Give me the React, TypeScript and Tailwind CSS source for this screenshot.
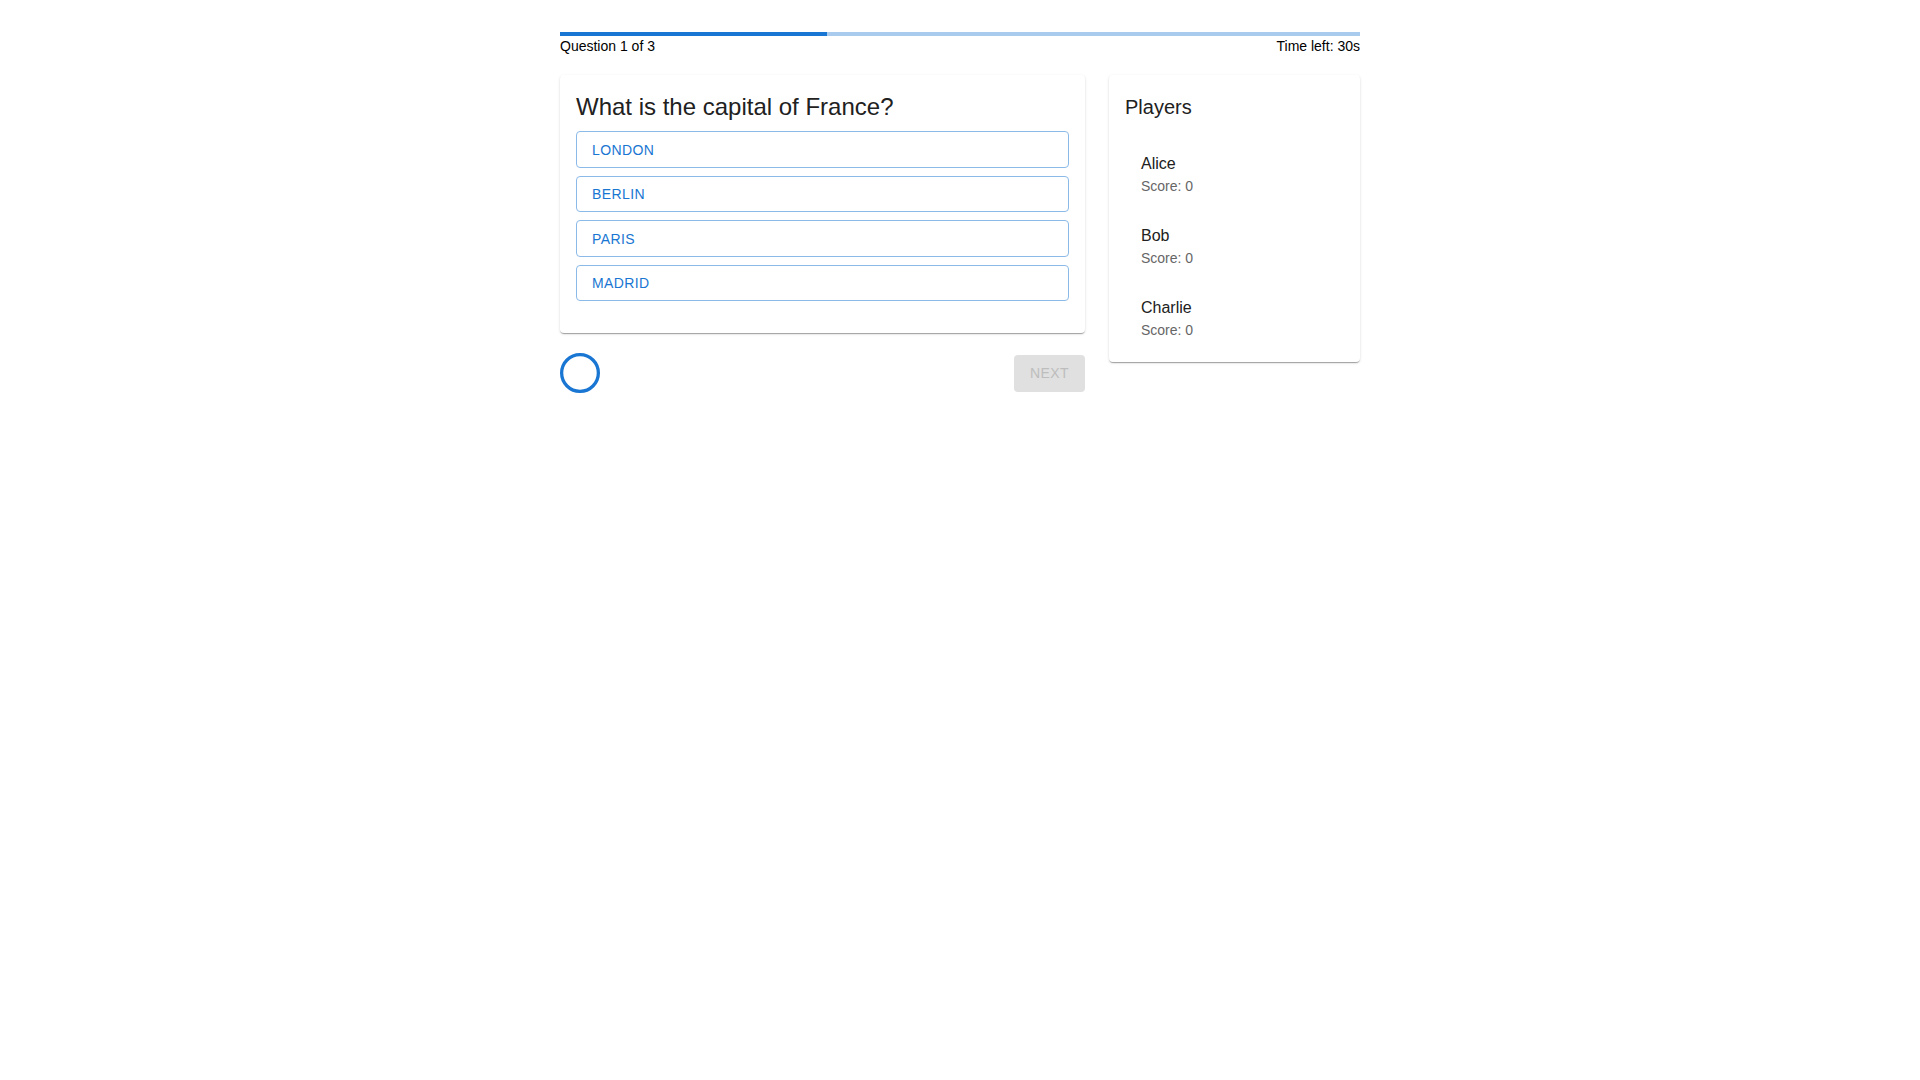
const answers = ['London', 'Berlin', 'Paris', 'Madrid']

const players = [
  {name: 'Alice', score: 0},
  {name: 'Bob', score: 0},
  {name: 'Charlie', score: 0},
]

const paperShadow =
  'shadow-[0px_2px_1px_-1px_rgba(0,0,0,0.2),0px_1px_1px_0px_rgba(0,0,0,0.14),0px_1px_3px_0px_rgba(0,0,0,0.12)]'

function Spinner() {
  return (
    <svg className="h-10 w-10 text-[#1976d2]" viewBox="22 22 44 44">
      <circle cx="44" cy="44" r="20.2" fill="none" stroke="currentColor" strokeWidth="3.6" />
    </svg>
  )
}

function QuestionCard() {
  return (
    <div className={`rounded bg-white px-4 pt-4 pb-6 ${paperShadow}`}>
      <h5 className="mb-[8.4px] text-2xl leading-8 text-[#212121]">What is the capital of France?</h5>
      {answers.map((answer) => (
        <button
          key={answer}
          className="mb-2 flex h-[36.5px] w-full items-center rounded border border-[#8cbae8] bg-white px-[15px] text-sm font-medium uppercase tracking-[0.4px] text-[#1976d2]"
        >
          {answer}
        </button>
      ))}
    </div>
  )
}

function PlayersCard() {
  return (
    <div className={`rounded bg-white ${paperShadow}`}>
      <h6 className="px-4 pt-4 pb-[7px] text-xl leading-8 text-[#212121]">Players</h6>
      <ul className="px-4 py-2">
        {players.map((p) => (
          <li key={p.name} className="px-4 py-2">
            <div className="my-1.5">
              <div className="text-base leading-6 text-[#212121]">{p.name}</div>
              <div className="text-sm leading-5 text-[#666666]">Score: {p.score}</div>
            </div>
          </li>
        ))}
      </ul>
    </div>
  )
}

export default function App() {
  const progress = (1 / 3) * 100

  return (
    <div className="min-h-screen bg-white font-['Liberation_Sans',Arial,sans-serif]">
      <div className="mx-auto w-[800px] pt-8">
        <div className="h-1 w-full bg-[#a8cbee]">
          <div className="h-full bg-[#1976d2]" style={{width: `${progress}%`}} />
        </div>
        <div className="flex justify-between text-sm leading-5 text-black">
          <span>Question 1 of 3</span>
          <span>Time left: 30s</span>
        </div>

        <div className="mt-[19px] flex items-start gap-6">
          <div className="w-[525px]">
            <QuestionCard />
            <div className="mt-5 flex items-center justify-between">
              <Spinner />
              <button
                disabled
                className="h-[36.5px] w-[71px] rounded bg-[#e0e0e0] text-sm font-medium uppercase tracking-[0.4px] text-[#bdbdbd]"
              >
                Next
              </button>
            </div>
          </div>
          <div className="w-[251px]">
            <PlayersCard />
          </div>
        </div>
      </div>
    </div>
  )
}
